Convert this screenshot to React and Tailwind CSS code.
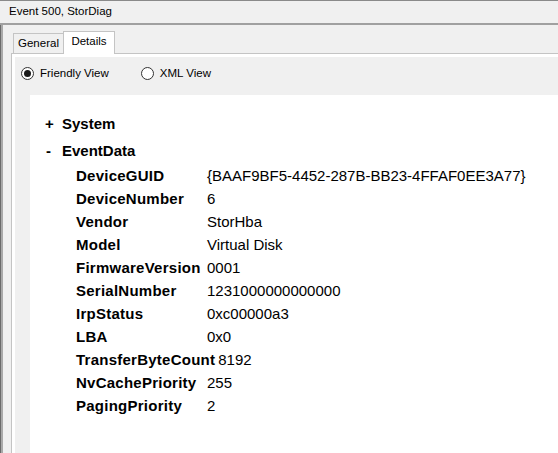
import React from "react";

const rows = [
  { label: "DeviceGUID", value: "{BAAF9BF5-4452-287B-BB23-4FFAF0EE3A77}" },
  { label: "DeviceNumber", value: "6" },
  { label: "Vendor", value: "StorHba" },
  { label: "Model", value: "Virtual Disk" },
  { label: "FirmwareVersion", value: "0001" },
  { label: "SerialNumber", value: "1231000000000000" },
  { label: "IrpStatus", value: "0xc00000a3" },
  { label: "LBA", value: "0x0" },
  { label: "TransferByteCount", value: "8192" },
  { label: "NvCachePriority", value: "255" },
  { label: "PagingPriority", value: "2" },
];

const Radio = ({ checked, label }) => (
  <div className="flex items-center">
    <div className="w-[13px] h-[13px] rounded-full border border-[#333] bg-white flex items-center justify-center">
      {checked && <div className="w-[7px] h-[7px] rounded-full bg-[#1a1a1a]" />}
    </div>
    <span className="ml-[6px] text-[11.5px] text-black">{label}</span>
  </div>
);

export default function App() {
  return (
    <div className="w-[558px] h-[453px] bg-[#f0f0f0] flex flex-col overflow-hidden font-['Liberation_Sans',Arial,sans-serif] text-black">
      {/* title bar */}
      <div className="h-[25px] shrink-0 border-t border-[#8a8a8a] border-b-2 border-b-[#a0a0a0] flex items-center pl-[9px] text-[11.5px]">
        Event 500, StorDiag
      </div>

      {/* body */}
      <div className="flex-1 flex border-l border-[#6b6b6b]">
        <div className="flex-1 flex border-l-2 border-[#a9a9a9] pl-[8px] pt-[6px]">
          <div className="flex-1 flex flex-col">
            {/* tabs */}
            <div className="flex items-start h-[23px] -mb-px relative z-10 pl-[2px]">
              <div className="mt-[2px] h-[20px] w-[50px] border border-r-0 border-b-0 border-[#c4c4c4] bg-[#f0f0f0] flex items-center justify-center text-[11.5px]">
                General
              </div>
              <div className="h-[23px] w-[52px] border border-b-0 border-[#c4c4c4] bg-white flex items-center justify-center pb-[2px] text-[11.5px]">
                Details
              </div>
            </div>

            {/* panel */}
            <div className="flex-1 flex flex-col border-l border-t border-[#c4c4c4] bg-white pl-[3px] pt-[3px]">
              <div className="flex-1 flex flex-col bg-[#f0f0f0]">
                <div className="h-[32px] flex items-center pl-[6px] pt-[1px] gap-[32px]">
                  <Radio checked label="Friendly View" />
                  <Radio label="XML View" />
                </div>

                <div className="flex-1 ml-[15px] mt-[6px] bg-white pl-[15px] pt-[18px]">
                  <div className="flex items-center h-[23px] mb-[4px] text-[15px] font-bold">
                    <span className="w-[17px]">+</span>
                    <span>System</span>
                  </div>
                  <div className="flex items-center h-[23px] mb-[2px] text-[15px] font-bold">
                    <span className="w-[17px] pl-[1px]">-</span>
                    <span>EventData</span>
                  </div>
                  <div className="pl-[31px]">
                    {rows.map((r) => (
                      <div key={r.label} className="flex items-center h-[23px] text-[15px]">
                        <span className="min-w-[128px] font-bold tracking-[0.25px]">{r.label}</span>
                        <span className="pl-[3px]">{r.value}</span>
                      </div>
                    ))}
                  </div>
                </div>
              </div>
            </div>
          </div>
        </div>
      </div>
    </div>
  );
}
